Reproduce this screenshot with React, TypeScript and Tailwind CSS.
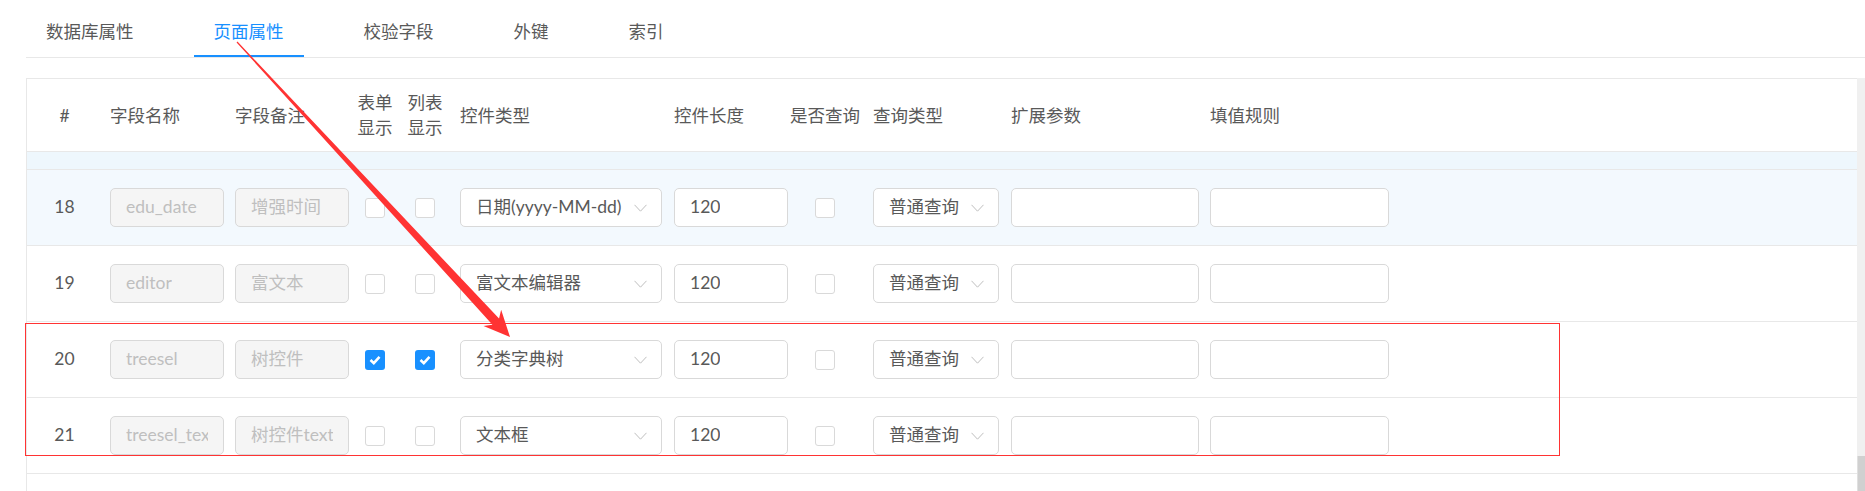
import React from 'react'

const font = { fontFamily: 'Lato, "Noto Sans CJK SC", sans-serif' }

const tabs = ['数据库属性', '页面属性', '校验字段', '外键', '索引']

interface RowData {
  n: number
  name: string
  note: string
  form: boolean
  list: boolean
  type: string
  hover?: boolean
}

const rows: RowData[] = [
  { n: 18, name: 'edu_date', note: '增强时间', form: false, list: false, type: '日期(yyyy-MM-dd)', hover: true },
  { n: 19, name: 'editor', note: '富文本', form: false, list: false, type: '富文本编辑器' },
  { n: 20, name: 'treesel', note: '树控件', form: true, list: true, type: '分类字典树' },
  { n: 21, name: 'treesel_text', note: '树控件text', form: false, list: false, type: '文本框' },
]

function Checkbox({ checked }: { checked: boolean }) {
  if (checked) {
    return (
      <span className="flex h-[20px] w-[20px] items-center justify-center rounded-[3px] bg-[#1890ff]">
        <svg width="20" height="20" viewBox="0 0 20 20">
          <polyline points="5.5,10 8.8,13.2 14.5,6.8" fill="none" stroke="#fff" strokeWidth="2.6" />
        </svg>
      </span>
    )
  }
  return <span className="block h-[20px] w-[20px] rounded-[3px] border border-[#d9d9d9] bg-white" />
}

function Input({ value, disabled, width }: { value?: string; disabled?: boolean; width: string }) {
  return (
    <div
      className={`flex h-[39px] items-center rounded-[5px] border border-[#d9d9d9] px-[15px] ${width} ${
        disabled ? 'bg-[#f5f5f5] text-[#bfbfbf]' : 'bg-white text-[#595959]'
      }`}
    >
      <div className="overflow-hidden whitespace-nowrap">{value}</div>
    </div>
  )
}

function Select({ value, width }: { value: string; width: string }) {
  return (
    <div
      className={`flex h-[39px] items-center justify-between rounded-[5px] border border-[#d9d9d9] bg-white pl-[15px] pr-[14px] text-[#595959] ${width}`}
    >
      <span className="whitespace-nowrap">{value}</span>
      <svg width="13" height="8" viewBox="0 0 13 8">
        <polyline points="0.5,0.8 6.5,7.2 12.5,0.8" fill="none" stroke="#bfbfbf" strokeWidth="1" />
      </svg>
    </div>
  )
}

function Row({ r }: { r: RowData }) {
  return (
    <div
      className={`flex h-[76px] items-center border-b border-[#e8e8e8] ${r.hover ? 'bg-[#f3f9fe]' : 'bg-white'}`}
    >
      <div className="w-[75px] text-center">{r.n}</div>
      <div className="w-[127px] pl-[8px]">
        <Input value={r.name} disabled width="w-[114px]" />
      </div>
      <div className="w-[126px] pl-[6px]">
        <Input value={r.note} disabled width="w-[114px]" />
      </div>
      <div className="flex w-[40px] justify-center">
        <Checkbox checked={r.form} />
      </div>
      <div className="flex w-[60px] justify-center">
        <Checkbox checked={r.list} />
      </div>
      <div className="w-[213px] pl-[5px]">
        <Select value={r.type} width="w-[202px]" />
      </div>
      <div className="w-[122px] pl-[6px]">
        <Input value="120" width="w-[114px]" />
      </div>
      <div className="flex w-[70px] justify-center">
        <Checkbox checked={false} />
      </div>
      <div className="w-[145px] pl-[13px]">
        <Select value="普通查询" width="w-[126px]" />
      </div>
      <div className="w-[199px] pl-[6px]">
        <Input width="w-[188px]" />
      </div>
      <div className="w-[190px] pl-[6px]">
        <Input width="w-[179px]" />
      </div>
    </div>
  )
}

export default function App() {
  return (
    <div className="relative h-[491px] w-[1865px] overflow-hidden bg-white text-[17.5px] text-[#595959]" style={font}>
      <div className="ml-[26px] flex border-b border-[#e8e8e8]">
        {tabs.map((t, i) => (
          <div
            key={t}
            className={`relative mr-[40px] flex h-[57px] items-center px-[20px] pt-[7px] ${
              i === 1 ? 'text-[#1890ff]' : 'text-[#595959]'
            }`}
          >
            {t}
            {i === 1 && <span className="absolute bottom-0 left-0 h-[2.5px] w-full bg-[#1890ff]" />}
          </div>
        ))}
      </div>

      <div className="ml-[26px] mt-[20px] flex h-[413px]">
        <div className="flex-1 border-l border-t border-[#e8e8e8]">
          <div className="flex h-[73px] items-center border-b border-[#e8e8e8] leading-[25px]">
            <div className="w-[75px] text-center">#</div>
            <div className="w-[127px] pl-[8px]">字段名称</div>
            <div className="w-[126px] pl-[6px]">字段备注</div>
            <div className="w-[40px] text-center">
              表单
              <br />
              显示
            </div>
            <div className="w-[60px] text-center">
              列表
              <br />
              显示
            </div>
            <div className="w-[213px] pl-[5px]">控件类型</div>
            <div className="w-[122px] pl-[6px]">控件长度</div>
            <div className="w-[70px] whitespace-nowrap text-center">是否查询</div>
            <div className="w-[145px] pl-[13px]">查询类型</div>
            <div className="w-[199px] pl-[6px]">扩展参数</div>
            <div className="w-[190px] pl-[6px]">填值规则</div>
          </div>
          <div className="h-[18px] border-b border-[#e8e8e8] bg-[#eef7fd]" />
          {rows.map((r) => (
            <Row key={r.n} r={r} />
          ))}
        </div>
        <div className="flex w-[8px] flex-col justify-end bg-[#f0f0f0]">
          <div className="h-[35px] border-l border-[#e0e0e0] bg-[#d0d0d0]" />
        </div>
      </div>

      <div className="pointer-events-none absolute left-[25px] top-[323px] h-[133px] w-[1535px] border border-[#f33]" />

      <svg className="pointer-events-none absolute left-0 top-0" width="1865" height="491">
        <polygon
          fill="#f33"
          points="236.56,42.41 492.44,324.65 483.53,326.07 510,337 501.15,309.77 499.04,318.53 237.44,41.59"
        />
      </svg>
    </div>
  )
}
